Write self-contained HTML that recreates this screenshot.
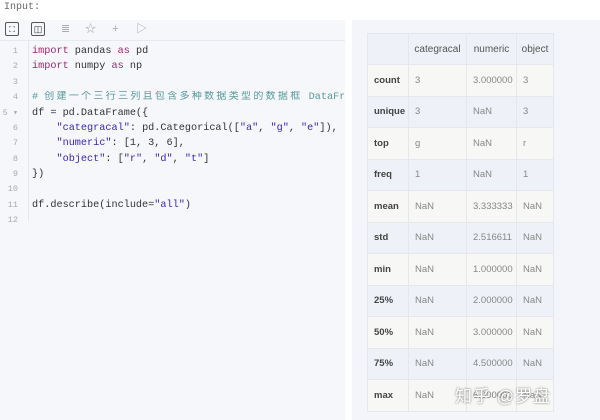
<!DOCTYPE html>
<html><head><meta charset="utf-8"><style>
body{margin:0;width:600px;height:420px;background:#fff;overflow:hidden;position:relative;font-family:"Liberation Sans","Noto Sans CJK SC",sans-serif}
.lbl{position:absolute;left:4px;top:2px;font:10px "Liberation Mono",monospace;color:#666}
.code{position:absolute;left:0;top:20px;width:345px;height:400px;background:#f5f7fb}
.tb{height:20px;border-bottom:1px solid #e6e9ef;position:relative}
.ic{position:absolute;top:3px;width:13px;height:13px;color:#aab;font-size:11px;line-height:13px;text-align:center}
.box{border:1px solid #555;border-radius:2px;color:#333;width:12px;height:12px;top:2px}
.gut{position:absolute;left:0;top:21px;width:28px;height:180px;border-right:1px solid #e4e7ee}
.ln{position:absolute;left:0;width:18px;text-align:right;font:8.5px/13px "Liberation Mono",monospace;color:#aaa}
.cl{position:absolute;left:32px;font:10.2px/13px "Liberation Mono","Noto Sans CJK SC",monospace;color:#333;white-space:pre;height:13px}
.k{color:#a0286e}.s{color:#3b27b3}.c{color:#5a9a9a}
.cj{letter-spacing:2.3px;font-size:10px}
.out{position:absolute;left:352px;top:20px;width:248px;height:400px;background:#f3f5fb}
table{position:absolute;left:15px;top:13px;border-collapse:collapse;font-size:9.5px;table-layout:fixed;width:186px}
td{border:1px solid #e5e7ec;height:31.5px;padding:0 0 0 6px;color:#888;box-sizing:border-box}
tr:nth-child(odd) td{background:#eef1f7}
tr:nth-child(even) td{background:#f7f7f5}
td:first-child{font-weight:bold;color:#444}
tr:first-child td{color:#555;font-weight:normal;text-align:center;padding:0;height:31px;font-size:10px}
.wm{position:absolute;left:455px;top:382px;font-size:17px;color:#fff;text-shadow:0 0 2px #666;letter-spacing:1px}
</style></head><body>
<div class="lbl">Input:</div>
<div class="code">
<div class="tb">
<div class="ic box" style="left:5px;font-size:8px">⛶</div>
<div class="ic box" style="left:31px;font-size:9px">◫</div>
<div class="ic" style="left:59px">≣</div>
<div class="ic" style="left:84px">☆</div>
<div class="ic" style="left:109px">+</div>
<div class="ic" style="left:135px">▷</div>
</div>
<div class="gut"></div>
</div>
<div style="position:absolute;left:0;top:1px">
<div class="ln" style="top:44px">1</div><div class="ln" style="top:59px">2</div><div class="ln" style="top:75px">3</div><div class="ln" style="top:90px">4</div><div class="ln" style="top:106px">5 ▾</div><div class="ln" style="top:121px">6</div><div class="ln" style="top:136px">7</div><div class="ln" style="top:152px">8</div><div class="ln" style="top:167px">9</div><div class="ln" style="top:182px">10</div><div class="ln" style="top:198px">11</div><div class="ln" style="top:213px">12</div>
<div class="cl" style="top:44px"><span class="k">import</span> pandas <span class="k">as</span> pd</div>
<div class="cl" style="top:59px"><span class="k">import</span> numpy <span class="k">as</span> np</div>
<div class="cl c" style="top:90px;width:312px;overflow:hidden"># <span class="cj">创建一个三行三列且包含多种数据类型的数据框</span> DataFrame</div>
<div class="cl" style="top:106px">df = pd.DataFrame({</div>
<div class="cl" style="top:121px">    <span class="s">"categracal"</span>: pd.Categorical([<span class="s">"a"</span>, <span class="s">"g"</span>, <span class="s">"e"</span>]),</div>
<div class="cl" style="top:136px">    <span class="s">"numeric"</span>: [1, 3, 6],</div>
<div class="cl" style="top:152px">    <span class="s">"object"</span>: [<span class="s">"r"</span>, <span class="s">"d"</span>, <span class="s">"t"</span>]</div>
<div class="cl" style="top:167px">})</div>
<div class="cl" style="top:198px">df.describe(include=<span class="s">"all"</span>)</div>
</div>
<div class="out">
<table>
<colgroup><col style="width:41px"><col style="width:58px"><col style="width:50px"><col style="width:37px"></colgroup>
<tr><td></td><td>categracal</td><td>numeric</td><td>object</td></tr>
<tr><td>count</td><td>3</td><td>3.000000</td><td>3</td></tr>
<tr><td>unique</td><td>3</td><td>NaN</td><td>3</td></tr>
<tr><td>top</td><td>g</td><td>NaN</td><td>r</td></tr>
<tr><td>freq</td><td>1</td><td>NaN</td><td>1</td></tr>
<tr><td>mean</td><td>NaN</td><td>3.333333</td><td>NaN</td></tr>
<tr><td>std</td><td>NaN</td><td>2.516611</td><td>NaN</td></tr>
<tr><td>min</td><td>NaN</td><td>1.000000</td><td>NaN</td></tr>
<tr><td>25%</td><td>NaN</td><td>2.000000</td><td>NaN</td></tr>
<tr><td>50%</td><td>NaN</td><td>3.000000</td><td>NaN</td></tr>
<tr><td>75%</td><td>NaN</td><td>4.500000</td><td>NaN</td></tr>
<tr><td>max</td><td>NaN</td><td>6.000000</td><td>NaN</td></tr>
</table>
</div>
<div class="wm">知乎 @罗盘</div>
</body></html>
